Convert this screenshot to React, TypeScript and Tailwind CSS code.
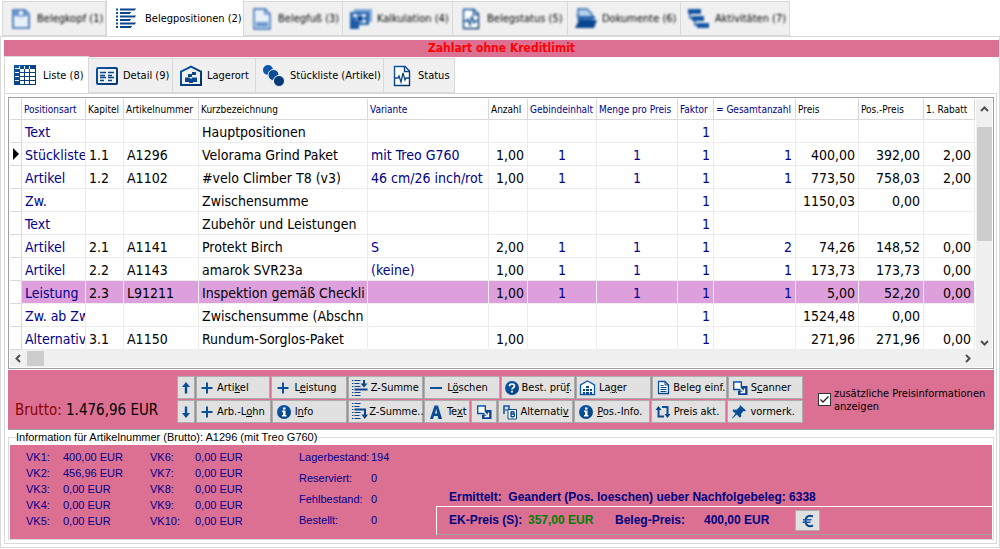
import React, { useState } from 'react';
import clsx from 'clsx';

const BLUE = 'url(#blue)';

const Svg = ({ size = 24, box = 24, children }: { size?: number; box?: number; children: React.ReactNode }) => (
    <svg width={size} height={size} viewBox={`0 0 ${box} ${box}`} fill="none" className="shrink-0" aria-hidden="true">{children}</svg>
);

const IconDocTop = () => (
    <Svg>
        <path d="M4 3h12l4 4v14H4z" fill="#e8f0fa" stroke="#2a66b0" strokeWidth="1.6" />
        <path d="M5 3h4v6H5zM15 3h1l4 4v2h-5z" fill="#6d9bd0" />
        <path d="M9 3v6h6V3" stroke="#2a66b0" />
    </Svg>
);

const IconList = () => (
    <Svg>
        <path d="M1 3.500h2M1 7h2M1 10.500h2M1 14h2M1 17.500h2M1 21h2" stroke={BLUE} strokeWidth="2" />
        <path d="M5 3.500h15v.01M5 7h10v.01M5 10.500h15v.01M5 14h10v.01M5 17.500h15v.01M5 21h11v.01" stroke="#0a468e" strokeWidth="1.800" />
    </Svg>
);

const IconDocBottom = () => (
    <Svg>
        <path d="M4 2h11l5 5v15H4z" fill="#e8f0fa" stroke="#2a66b0" strokeWidth="1.4" />
        <path d="M15 2v5h5" stroke="#2a66b0" strokeWidth="1.2" />
        <path d="M6 15h12v5H6z" fill="#6d9bd0" />
    </Svg>
);

const IconMoney = () => (
    <Svg>
        <path d="M5 2h18v13h-3V6H5z" fill="#7fa8d8" />
        <path d="M1 5h19v13H1z" fill="#2a66b0" />
        <path d="M4 7h4v3H4zM13 7h4v3h-4zM13 13h4v3h-4z" fill="#dbe7f5" />
        <circle cx="11" cy="11.500" r="3.500" fill="#0a468e" stroke="#dbe7f5" />
        <path d="M1 14h9v8H1z" fill="#1c5aa6" />
    </Svg>
);

const IconStatus = () => (
    <Svg>
        <path d="M4.500 2.500h10.500l4.500 4.500v14.500h-15z" fill="#fff" stroke={BLUE} strokeWidth="1.400" />
        <path d="M14.500 2.500v5h5" stroke="#0a468e" strokeWidth="1.400" />
        <path d="M5 14h3l1-2 2 6 2-9 2 7 1-2h4" stroke="#0a468e" strokeWidth="1.300" />
    </Svg>
);

const IconFolder = () => (
    <Svg>
        <path d="M4 2h9l5 5v6H4z" fill="#b9d0eb" stroke="#2a66b0" strokeWidth="1.400" />
        <path d="M1 8h4v10l4-6h12V9" fill="#2a66b0" />
        <path d="M5 13h18l-3 8H1z" fill="#0a468e" />
    </Svg>
);

const IconFlow = () => (
    <Svg>
        <path d="M1 2h13v5H1zM5 9h12v5H5zM10 16h12v5H10z" fill="#1455a4" />
        <path d="M3 6v5h3M8 13v5h3" stroke="#1455a4" strokeWidth="1.500" />
    </Svg>
);

const IconTable = () => (
    <Svg>
        <path d="M1 2h22v20H1z" fill={BLUE} />
        <path d="M7 6h4v3H7zM12 6h4v3h-4zM17 6h5v3h-5zM7 10h4v3H7zM12 10h4v3h-4zM17 10h5v3h-5zM7 14h4v3H7zM12 14h4v3h-4zM17 14h5v3h-5zM7 18h4v3H7zM12 18h4v3h-4zM17 18h5v3h-5z" fill="#fff" />
        <path d="M2 5.500h4M2 9.500h4M2 13.500h4M2 17.500h4M6.500 3v3M11.500 3v3M16.500 3v3" stroke="#fff" />
    </Svg>
);

const IconDetail = () => (
    <Svg>
        <rect x="2" y="4" width="20" height="16" rx="1" stroke={BLUE} strokeWidth="2" />
        <path d="M5 8.500h6M5 11.500h5M5 13.500h6M5 16.500h4M13 8.500h6M13 11.500h4M13 13.500h6M13 16.500h4" stroke="#0a468e" strokeWidth="1.300" />
    </Svg>
);

const IconWarehouse = () => (
    <Svg>
        <path d="M2 21V7.500l10-5L22 7.500V21z" stroke={BLUE} strokeWidth="2" />
        <path d="M9 10h4v3H9zM13 8h4v3h-4zM6 13.500h5V18H6zM13 13.500h5V18h-5zM10 14.500h4V19h-4z" fill="#0a468e" />
    </Svg>
);

const IconChain = () => (
    <Svg>
        <circle cx="6" cy="6" r="5" fill="#0d57ac" />
        <circle cx="11.500" cy="11" r="5.500" fill="#0d4c98" stroke="#f0f0f0" />
        <circle cx="17" cy="17" r="5.500" fill="#053a78" stroke="#f0f0f0" />
    </Svg>
);

const IconUp = () => (
    <Svg size={14} box={14}><path d="M7 1l4 5H8.200v6.500H5.800V6H3z" fill={BLUE} /></Svg>
);
const IconDown = () => (
    <Svg size={14} box={14}><path d="M7 13l4-5H8.200V1.500H5.800V8H3z" fill={BLUE} /></Svg>
);
const IconPlus = () => (
    <Svg size={14} box={14}><path d="M6 1.500h2V6h4.500v2H8v4.500H6V8H1.500V6H6z" fill={BLUE} /></Svg>
);
const IconMinus = () => (
    <Svg size={14} box={14}><path d="M1 6h12v2H1z" fill={BLUE} /></Svg>
);
const IconInfo = () => (
    <Svg size={16} box={16}>
        <circle cx="8" cy="8" r="7" fill={BLUE} />
        <path d="M7 3.500h2.500v2H7zM6 6.500h3.500v4.500h1v1.500H6V11h1V8H6z" fill="#fff" />
    </Svg>
);
const IconHelp = () => (
    <Svg size={16} box={16}>
        <circle cx="8" cy="8" r="7" fill={BLUE} />
        <path d="M5.500 6.200C5.500 3.300 10.500 3.300 10.500 6c0 1.800-2.500 1.700-2.500 3.500" stroke="#fff" strokeWidth="1.700" />
        <path d="M7.100 10.800h1.800v1.700H7.100z" fill="#fff" />
    </Svg>
);
const IconSumUp = () => (
    <Svg size={17} box={17}>
        <path d="M1 1.500h1.500M1 4.500h1.500M1 7.500h1.500M1 10.500h1.500M1 13.500h1.500M1 16.500h1.500M3.500 1.500h6M3.500 4.500h5M3.500 7.500h6M3.500 13.500h6M3.500 16.500h6" stroke="#0a468e" />
        <path d="M3.500 10.500h13" stroke="#0a468e" strokeWidth="2" />
        <path d="M13 1v4" stroke="#0a468e" strokeWidth="2" />
        <path d="M9.500 4.500h7L13 8.500z" fill="#0a468e" />
    </Svg>
);
const IconSumDown = () => (
    <Svg size={17} box={17}>
        <path d="M1 .5h1.500M1 3.500h1.500M1 6.500h1.500M1 9.500h1.500M1 12.500h1.500M1 15.500h1.500M3.500 .5h6M3.500 3.500h5M3.500 9.500h6M3.500 12.500h5M3.500 15.500h6" stroke="#0a468e" />
        <path d="M3.500 6.500h10.500v6" stroke="#0a468e" strokeWidth="2" />
        <path d="M10.500 11.500h6.500L13.800 16z" fill="#0a468e" />
    </Svg>
);
const IconLetterA = () => (
    <Svg size={16} box={16}>
        <path fillRule="evenodd" d="M6.500 1.500h3.500L14 15h-3.500l-.8-3H6l-1 3H2zM7 9.500h2.300L8.200 5z" fill={BLUE} />
    </Svg>
);
const IconCopyTo = () => (
    <Svg size={16} box={16}>
        <path d="M1.700 2h7.600v7.500H1.700z" fill="#fff" stroke={BLUE} strokeWidth="1.400" />
        <path d="M10 6h5.500v9H6v-4.500h4z" fill="#0a468e" />
        <path d="M7.500 7.500l4.500 4.500M12.500 8.500v4h-4" stroke="#fff" strokeWidth="1.300" />
    </Svg>
);
const IconStore = () => (
    <Svg size={17} box={17}>
        <path d="M1.500 15.500V6l7-4 7 4v9.500z" fill="#fff" stroke="#0a5aac" strokeWidth="1.300" />
        <path d="M7 7h3v2H7zM4 10h2v2H4zM7 10h3v2H7zM11 10h2v2h-2zM4 13h2v2H4zM7 13h3v2H7zM11 13h2v2h-2z" fill="#0a468e" />
    </Svg>
);
const IconPage = () => (
    <Svg size={15} box={15}>
        <path d="M2.500 1.500h6.500l3.500 3.500v8.500h-10z" fill="#fff" stroke={BLUE} strokeWidth="1.300" />
        <path d="M9 1.500V5h3.500M4.500 5.500h3M4.500 7.500h6M4.500 9.500h6M4.500 11.500h6" stroke="#0a468e" />
    </Svg>
);
const IconAlt = () => (
    <Svg size={16} box={16}>
        <path d="M2 10V2h5v3" stroke="#0a5aac" strokeWidth="1.600" />
        <path d="M3 6h3" stroke="#0a5aac" strokeWidth="1.200" />
        <path d="M6 5.500h8.500v9.500H6z" fill="#fff" stroke="#0a468e" />
        <path d="M9 7.500v5.500M9 7.700h2.200c1.300 0 1.300 2.300 0 2.300H9h2.400c1.500 0 1.500 2.700 0 2.700H9" stroke="#0a468e" strokeWidth="1.400" />
    </Svg>
);
const IconRepeat = () => (
    <Svg size={16} box={16}>
        <path d="M3.500 5v7.500H9M7 3h5.500v8" stroke={BLUE} strokeWidth="2" />
        <path d="M.5 6l3-4 3 4zM9.500 10l3 4 3-4z" fill="#0a468e" />
    </Svg>
);
const IconPin = () => (
    <Svg size={16} box={16}>
        <path d="M9 1l6 5.500-1.500.8-1-.2-2.500 3 .2 2.700-1.500.8-3-3L1.500 14.500 1 14l3.500-4.500L1.500 7l.8-1.500 3.200.2L8.500 3z" fill={BLUE} />
    </Svg>
);
const IconEuro = () => (
    <Svg size={14} box={14}>
        <path d="M12 2.500C8 .8 4.500 2.500 4.500 7s3.500 6.200 7.500 4.500" stroke="#0a468e" strokeWidth="2" />
        <path d="M2 5.700h8.500M1.500 8.300H9.500" stroke="#1c5aa6" strokeWidth="1.500" />
    </Svg>
);

const mainTabs = [
    { label: 'Belegkopf (1)', icon: <IconDocTop />, width: 'w-[104px]' },
    { label: 'Belegpositionen (2)', icon: <IconList />, width: 'w-[138px]' },
    { label: 'Belegfuß (3)', icon: <IconDocBottom />, width: 'w-[99px]' },
    { label: 'Kalkulation (4)', icon: <IconMoney />, width: 'w-[110px]' },
    { label: 'Belegstatus (5)', icon: <IconStatus />, width: 'w-[115px]' },
    { label: 'Dokumente (6)', icon: <IconFolder />, width: 'w-[113px]' },
    { label: 'Aktivitäten (7)', icon: <IconFlow />, width: 'w-[109px]' },
];

const subTabs = [
    { label: 'Liste (8)', icon: <IconTable />, width: 'w-[85px]' },
    { label: 'Detail (9)', icon: <IconDetail />, width: 'w-[84px]' },
    { label: 'Lagerort', icon: <IconWarehouse />, width: 'w-[83px]' },
    { label: 'Stückliste (Artikel)', icon: <IconChain />, width: 'w-[128px]' },
    { label: 'Status', icon: <IconStatus />, width: 'w-[71px]' },
];

const columns = [
    { title: 'Positionsart', width: 'w-[64px]', blue: true, cell: 'pl-[3px]' },
    { title: 'Kapitel', width: 'w-[38px]', cell: 'pl-[3px]' },
    { title: 'Artikelnummer', width: 'w-[75px]', cell: 'pl-[3px]' },
    { title: 'Kurzbezeichnung', width: 'w-[169px]', cell: 'pl-[3px]' },
    { title: 'Variante', width: 'w-[121px]', blue: true, cell: 'pl-[3px]' },
    { title: 'Anzahl', width: 'w-[39px]', cell: 'pr-[3px] text-right' },
    { title: 'Gebindeinhalt', width: 'w-[69px]', blue: true, cell: 'text-center' },
    { title: 'Menge pro Preis', width: 'w-[81px]', blue: true, cell: 'text-center' },
    { title: 'Faktor', width: 'w-[36px]', blue: true, cell: 'pr-[3px] text-right' },
    { title: '= Gesamtanzahl', width: 'w-[82px]', blue: true, cell: 'pr-[3px] text-right' },
    { title: 'Preis', width: 'w-[63px]', cell: 'pr-[3px] text-right' },
    { title: 'Pos.-Preis', width: 'w-[65px]', cell: 'pr-[3px] text-right' },
    { title: '1. Rabatt', width: 'w-[51px]', cell: 'pr-[3px] text-right' },
];

const rows = [
    ['Text', '', '', 'Hauptpositionen', '', '', '', '', '1', '', '', '', ''],
    ['Stückliste', '1.1', 'A1296', 'Velorama Grind Paket', 'mit Treo G760', '1,00', '1', '1', '1', '1', '400,00', '392,00', '2,00'],
    ['Artikel', '1.2', 'A1102', '#velo Climber T8 (v3)', '46 cm/26 inch/rot', '1,00', '1', '1', '1', '1', '773,50', '758,03', '2,00'],
    ['Zw.', '', '', 'Zwischensumme', '', '', '', '', '1', '', '1150,03', '0,00', ''],
    ['Text', '', '', 'Zubehör und Leistungen', '', '', '', '', '1', '', '', '', ''],
    ['Artikel', '2.1', 'A1141', 'Protekt Birch', 'S', '2,00', '1', '1', '1', '2', '74,26', '148,52', '0,00'],
    ['Artikel', '2.2', 'A1143', 'amarok SVR23a', '(keine)', '1,00', '1', '1', '1', '1', '173,73', '173,73', '0,00'],
    ['Leistung', '2.3', 'L91211', 'Inspektion gemäß Checkli', '', '1,00', '1', '1', '1', '1', '5,00', '52,20', '0,00'],
    ['Zw. ab Zw', '', '', 'Zwischensumme (Abschn', '', '', '', '', '1', '', '1524,48', '0,00', ''],
    ['Alternativ', '3.1', 'A1150', 'Rundum-Sorglos-Paket', '', '1,00', '', '', '1', '', '271,96', '271,96', '0,00'],
];

const currentRow = 1;
const markedRow = 7;

const prices = [
    ['VK1:', '400,00 EUR', 'VK6:', '0,00 EUR'],
    ['VK2:', '456,96 EUR', 'VK7:', '0,00 EUR'],
    ['VK3:', '0,00 EUR', 'VK8:', '0,00 EUR'],
    ['VK4:', '0,00 EUR', 'VK9:', '0,00 EUR'],
    ['VK5:', '0,00 EUR', 'VK10:', '0,00 EUR'],
];

const stock = [
    ['Lagerbestand:', '194'],
    ['Reserviert:', '0'],
    ['Fehlbestand:', '0'],
    ['Bestellt:', '0'],
];

type TabProps = { label: string; icon: React.ReactNode; width: string; active: boolean; blurred?: boolean; onClick: () => void };

const Tab = ({ label, icon, width, active, blurred, onClick }: TabProps) => (
    <button
        role="tab"
        aria-selected={active}
        onClick={onClick}
        className={clsx(
            'flex shrink-0 items-center border-t border-r border-[#d9d9d9] whitespace-nowrap first:border-l',
            width,
            active ? 'z-10 h-[37px] border-l bg-white pl-2' : 'h-[35px] border-b bg-[#f0f0f0] pl-[6px]',
        )}
    >
        <span className={clsx('flex items-center', active ? 'gap-[6px]' : 'gap-1', blurred && 'blur-[1px]')}>
            {icon}
            {label}
        </span>
    </button>
);

type ToolButtonProps = { icon: React.ReactNode; children: React.ReactNode; tight?: boolean };

const ToolButton = ({ icon, children, tight }: ToolButtonProps) => (
    <button className={clsx('flex h-[23px] min-w-0 flex-1 items-center border border-[#adadad] bg-[#e1e1e1] whitespace-nowrap hover:bg-[#e5f1fb]', !tight && 'gap-px pl-px')}>
        <span className="flex w-5 shrink-0 justify-center">{icon}</span>
        <span>{children}</span>
    </button>
);

const Chevron = ({ d }: { d: string }) => (
    <svg width="9" height="9" viewBox="0 0 9 9" fill="none" stroke="#505050" strokeWidth="2" aria-hidden="true"><path d={d} /></svg>
);

const PositionTable = () => (
    <table className="w-full table-fixed border-separate border-spacing-0">
        <colgroup>
            <col className="w-[12px]" />
            {columns.map(c => <col key={c.title} className={c.width} />)}
        </colgroup>
        <thead className="text-[10px]">
            <tr className="h-[21px]">
                <th className="border-r border-b border-[#d9d9d9] p-0" aria-label="Zeiger"></th>
                {columns.map(c => (
                    <th key={c.title} className={clsx('overflow-hidden border-r border-b border-[#d9d9d9] p-0 pl-[2px] text-left font-normal whitespace-nowrap', c.blue && 'text-[#00008b]')}>
                        {c.title}
                    </th>
                ))}
            </tr>
        </thead>
        <tbody className="text-[14px] leading-5">
            {rows.map((row, r) => (
                <tr key={r} className="h-[23px]">
                    <td className="border-r border-b border-[#d9d9d9] p-0">
                        {r === currentRow && <svg width="10" height="12" viewBox="0 0 10 12" className="block"><path d="M3 0l6 6-6 6z" fill="#000" /></svg>}
                    </td>
                    {row.map((value, i) => (
                        <td
                            key={i}
                            className={clsx(
                                'overflow-hidden border-r border-b p-0 pt-[2px] whitespace-nowrap',
                                r === markedRow ? 'border-[#f0f0f0] bg-[#dda0dd]' : 'border-[#ececec]',
                                columns[i].blue && 'text-[#00008b]',
                                columns[i].cell,
                            )}
                        >
                            {value}
                        </td>
                    ))}
                </tr>
            ))}
        </tbody>
    </table>
);

export default function App() {
    const [mainTab, setMainTab] = useState(1);
    const [subTab, setSubTab] = useState(0);
    const [extraInfo, setExtraInfo] = useState(true);

    return (
        <div className="w-full bg-white font-['DejaVu_Sans_Condensed','DejaVu_Sans',sans-serif] text-[11px] leading-[13px] text-black">
            <svg width="0" height="0" className="absolute" aria-hidden="true">
                <linearGradient id="blue" gradientUnits="userSpaceOnUse" x1="0" y1="0" x2="20" y2="20">
                    <stop offset="0" stopColor="#0d5cb4" />
                    <stop offset="1" stopColor="#043468" />
                </linearGradient>
            </svg>

            {/* main tabs */}
            <div role="tablist" className="flex h-[37px] items-end border-b border-[#d9d9d9] pl-[2px]">
                {mainTabs.map((t, i) => (
                    <Tab key={t.label} {...t} active={i === mainTab} blurred={i !== mainTab} onClick={() => setMainTab(i)} />
                ))}
            </div>

            <div className="border border-t-0 border-[#d9d9d9] pt-[3px] pb-[3px] pl-[3px]">
                <div className="bg-[#db7093] text-center text-[12px] leading-[17px] font-bold text-[#ff0000]">Zahlart ohne Kreditlimit</div>

                {/* sub tabs */}
                <div role="tablist" className="mr-[2px] flex h-[37px] items-end border-b border-[#d9d9d9]">
                    {subTabs.map((t, i) => (
                        <Tab key={t.label} {...t} active={i === subTab} onClick={() => setSubTab(i)} />
                    ))}
                </div>

                <div className="mr-[2px] border border-t-0 border-[#d9d9d9] p-[3px] pr-[2px]">
                    {/* position list */}
                    <div className="border border-[#a0a0a0] p-px">
                        <div className="flex">
                            <div className="min-w-0 flex-1"><PositionTable /></div>
                            <div className="ml-px flex w-4 flex-col items-center bg-[#f0f0f0]">
                                <button aria-label="Nach oben" className="flex h-7 w-full items-center justify-center pb-2"><Chevron d="M1 6l3.500-3.500L8 6" /></button>
                                <div className="h-[114px] w-[15px] bg-[#cdcdcd]"></div>
                                <button aria-label="Nach unten" className="mt-auto flex h-4 w-full items-center justify-center"><Chevron d="M1 3l3.500 3.500L8 3" /></button>
                            </div>
                        </div>
                        <div className="flex h-[17px] items-center bg-[#f0f0f0] pr-4">
                            <button aria-label="Nach links" className="flex h-full w-[17px] items-center justify-center"><Chevron d="M6 1L2.500 4.500 6 8" /></button>
                            <div className="h-[15px] w-[17px] bg-[#cdcdcd]"></div>
                            <button aria-label="Nach rechts" className="ml-auto flex h-full w-[17px] items-center justify-center"><Chevron d="M3 1l3.500 3.500L3 8" /></button>
                        </div>
                    </div>

                    {/* action bar */}
                    <div className="mt-px flex items-center border-b border-[#a0a0a0] bg-[#db7093] py-[6px]">
                        <div className="w-[169px] shrink-0 self-end pb-1 pl-[7px] text-[15px] leading-[18px] whitespace-nowrap">
                            <span className="text-[#8b0000]">Brutto:</span> 1.476,96 EUR
                        </div>
                        <div className="flex w-[626px] flex-col gap-px">
                            <div className="flex gap-px">
                                <button aria-label="Position nach oben" className="flex h-[23px] w-[18px] shrink-0 items-center justify-center border border-[#adadad] bg-[#e1e1e1]"><IconUp /></button>
                                <ToolButton tight icon={<IconPlus />}>Arti<u>k</u>el</ToolButton>
                                <ToolButton icon={<IconPlus />}>L<u>e</u>istung</ToolButton>
                                <ToolButton icon={<IconSumUp />}>Z-Summe</ToolButton>
                                <ToolButton icon={<IconMinus />}>L<u>ö</u>schen</ToolButton>
                                <ToolButton tight icon={<IconHelp />}>Best. prü<u>f</u>.</ToolButton>
                                <ToolButton icon={<IconStore />}>La<u>g</u>er</ToolButton>
                                <ToolButton tight icon={<IconPage />}>Beleg einf.</ToolButton>
                                <ToolButton icon={<IconCopyTo />}>S<u>c</u>anner</ToolButton>
                            </div>
                            <div className="flex gap-px">
                                <button aria-label="Position nach unten" className="flex h-[23px] w-[18px] shrink-0 items-center justify-center border border-[#adadad] bg-[#e1e1e1]"><IconDown /></button>
                                <ToolButton tight icon={<IconPlus />}>Arb.-L<u>o</u>hn</ToolButton>
                                <ToolButton icon={<IconInfo />}>I<u>n</u>fo</ToolButton>
                                <ToolButton tight icon={<IconSumDown />}>Z-Summe..</ToolButton>
                                <div className="flex min-w-0 flex-1 gap-px">
                                    <ToolButton icon={<IconLetterA />}>Te<u>x</u>t</ToolButton>
                                    <button aria-label="Text übernehmen" className="flex h-[23px] w-[26px] shrink-0 items-center justify-center border border-[#adadad] bg-[#e1e1e1]"><IconCopyTo /></button>
                                </div>
                                <ToolButton icon={<IconAlt />}>Alternati<u>v</u></ToolButton>
                                <ToolButton icon={<IconInfo />}><u>P</u>os.-Info.</ToolButton>
                                <ToolButton icon={<IconRepeat />}>Preis akt.</ToolButton>
                                <ToolButton icon={<IconPin />}>vormerk.</ToolButton>
                            </div>
                        </div>
                        <label className="ml-[15px] flex flex-1 items-center gap-[3px]">
                            <span className="relative flex shrink-0">
                                <input type="checkbox" checked={extraInfo} onChange={e => setExtraInfo(e.target.checked)} className="h-[13px] w-[13px] appearance-none border border-[#333333] bg-white" />
                                {extraInfo && <svg width="13" height="13" viewBox="0 0 13 13" fill="none" className="pointer-events-none absolute inset-0"><path d="M2.500 6.500l2.500 2.500L10.500 3.500" stroke="#222" strokeWidth="1.300" /></svg>}
                            </span>
                            <span>zusätzliche Preisinformationen anzeigen</span>
                        </label>
                    </div>

                    {/* article info */}
                    <fieldset className="min-w-0 border border-[#dcdcdc] px-px font-['Liberation_Sans',Arial,sans-serif]">
                        <legend className="ml-[6px] leading-[14px]">Information für Artikelnummer (Brutto): A1296 (mit Treo G760)</legend>
                        <div className="mt-px flex min-h-[94px] bg-[#db7093] text-[#00008b]">
                            <div className="flex w-[426px] shrink-0 items-start pt-1 pl-4">
                                <div className="grid grid-cols-[37px_87px_45px_104px] leading-4">
                                    {prices.flat().map((p, i) => <span key={i}>{p}</span>)}
                                </div>
                                <div className="grid grid-cols-[72px_50px] gap-y-[5px] leading-4">
                                    {stock.flat().map((s, i) => <span key={i}>{s}</span>)}
                                </div>
                            </div>
                            <div className="flex min-w-0 flex-1 flex-col justify-end pb-1 text-[12px] font-bold text-[#000080]">
                                <div className="pl-[13px] leading-[18px] whitespace-pre">Ermittelt:  Geandert (Pos. loeschen) ueber Nachfolgebeleg: 6338</div>
                                <div className="flex h-[29px] items-center border-t border-b border-l border-t-white border-b-[#a0a0a0] border-l-white pl-3 whitespace-nowrap">
                                    <span className="w-[79px]">EK-Preis (S):</span>
                                    <span className="w-[87px] text-[#008000]">357,00 EUR</span>
                                    <span className="w-[89px]">Beleg-Preis:</span>
                                    <span className="w-[91px]">400,00 EUR</span>
                                    <button aria-label="Preis in Euro" className="flex h-[21px] w-[25px] items-center justify-center border border-[#adadad] bg-[#e1e1e1]"><IconEuro /></button>
                                </div>
                            </div>
                        </div>
                    </fieldset>
                </div>
            </div>
        </div>
    );
}
